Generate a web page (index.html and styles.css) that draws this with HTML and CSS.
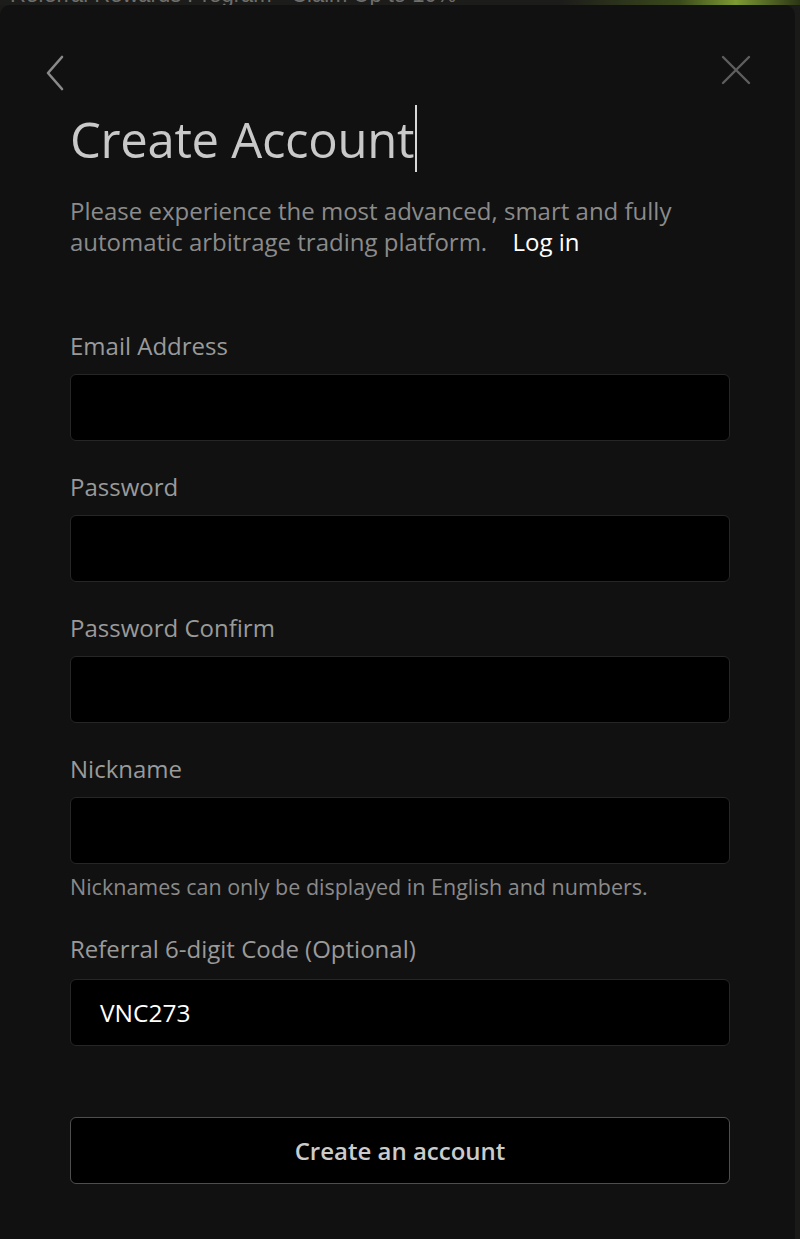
FILE: index.html
```html
<!DOCTYPE html>
<html lang="en">
<head>
<meta charset="utf-8">
<title>Create Account</title>
<link rel="stylesheet" href="styles.css">
</head>
<body>
<div class="backdrop">
  <div class="banner"><span class="banner-text">Referral Rewards Program - Claim Up to 10%</span><span class="banner-art"></span></div>
</div>
<div class="modal">
  <div class="nav">
    <button class="icon-btn back" aria-label="Back">
      <svg width="22" height="36" viewBox="0 0 22 36"><path d="M18 2 L4 18 L18 34" fill="none" stroke="#8a8a8a" stroke-width="2.6" stroke-linecap="round" stroke-linejoin="round"/></svg>
    </button>
    <button class="icon-btn close" aria-label="Close">
      <svg width="30" height="30" viewBox="0 0 30 30"><path d="M2 2 L28 28 M28 2 L2 28" fill="none" stroke="#5e5e5e" stroke-width="2.4" stroke-linecap="round"/></svg>
    </button>
  </div>
  <div class="content">
    <h1 class="title">Create Account<span class="caret"></span></h1>
    <p class="intro">Please experience the most advanced, smart and fully automatic arbitrage trading platform. <a class="login" href="#">Log in</a></p>

    <form class="form">
      <div class="field">
        <label class="label">Email Address</label>
        <div class="input"></div>
      </div>
      <div class="field">
        <label class="label">Password</label>
        <div class="input"></div>
      </div>
      <div class="field">
        <label class="label">Password Confirm</label>
        <div class="input"></div>
      </div>
      <div class="field">
        <label class="label">Nickname</label>
        <div class="input"></div>
        <div class="hint">Nicknames can only be displayed in English and numbers.</div>
      </div>
      <div class="field field-last">
        <label class="label">Referral 6-digit Code (Optional)</label>
        <div class="input filled">VNC273</div>
      </div>
      <button type="button" class="submit">Create an account</button>
    </form>
  </div>
</div>
</body>
</html>
```

FILE: styles.css
```css
* { box-sizing: border-box; }
html, body { margin: 0; padding: 0; }
body {
  background: #1a1a18;
  font-family: "Open Sans", "Noto Sans", sans-serif;
  width: 800px;
  height: 1239px;
  overflow: hidden;
}
.backdrop { height: 5px; overflow: hidden; }
.banner {
  height: 5px;
  display: flex;
  justify-content: space-between;
  background: linear-gradient(90deg, #1c1c1a 0%, #1c1c1a 70%, #3b4a1c 85%, #7d9a33 92%, #2b3516 100%);
}
.banner-text {
  font-family: "Liberation Sans", sans-serif;
  font-size: 22px;
  line-height: 22px;
  color: #6f6f6d;
  margin-top: -16px;
  padding-left: 10px;
  white-space: nowrap;
}
.modal {
  width: 795px;
  height: 1234px;
  background: #111111;
  border-radius: 10px 10px 0 0;
}
.nav {
  display: flex;
  justify-content: space-between;
  align-items: center;
  padding: 49px 44px 0 44px;
  height: 86px;
}
.icon-btn {
  background: none;
  border: 0;
  padding: 0;
  display: flex;
}
.close { margin-top: -5px; }
.content { padding: 0 65px 0 70px; }
.title {
  margin: 14px 0 0;
  font-weight: 400;
  font-size: 49px;
  line-height: 64px;
  color: #c9c9c9;
  letter-spacing: -0.3px;
  display: flex;
  align-items: center;
}
.caret {
  display: inline-block;
  width: 1.5px;
  height: 67px;
  background: #d8d8d8;
  margin-left: 1px;
}
.intro {
  margin: 23px 0 0;
  font-size: 24px;
  line-height: 31px;
  color: #8b8b8b;
}
.login {
  color: #ffffff;
  text-decoration: none;
  padding-left: 19px;
}
.form {
  margin-top: 74px;
  display: flex;
  flex-direction: column;
}
.field { display: flex; flex-direction: column; margin-bottom: 31px; }
.label {
  font-size: 24px;
  line-height: 30px;
  color: #9a9a9a;
  margin-bottom: 13px;
}
.input {
  height: 67px;
  background: #000;
  border: 1px solid #262626;
  border-radius: 6px;
  display: flex;
  align-items: center;
  padding: 0 29px;
  font-size: 24.5px;
  color: #ffffff;
}
.hint {
  margin-top: 10px;
  font-size: 21.5px;
  line-height: 26px;
  color: #8a8a8a;
  margin-bottom: 3px;
}
.field-last { margin-bottom: 71px; }
.field-last .label { margin-bottom: 15px; }
.submit {
  height: 67px;
  background: #000;
  border: 1px solid #4e4e4e;
  border-radius: 6px;
  font-family: "Open Sans", "Noto Sans", sans-serif;
  font-size: 24px;
  font-weight: 600;
  color: #cbcbcb;
}
```
